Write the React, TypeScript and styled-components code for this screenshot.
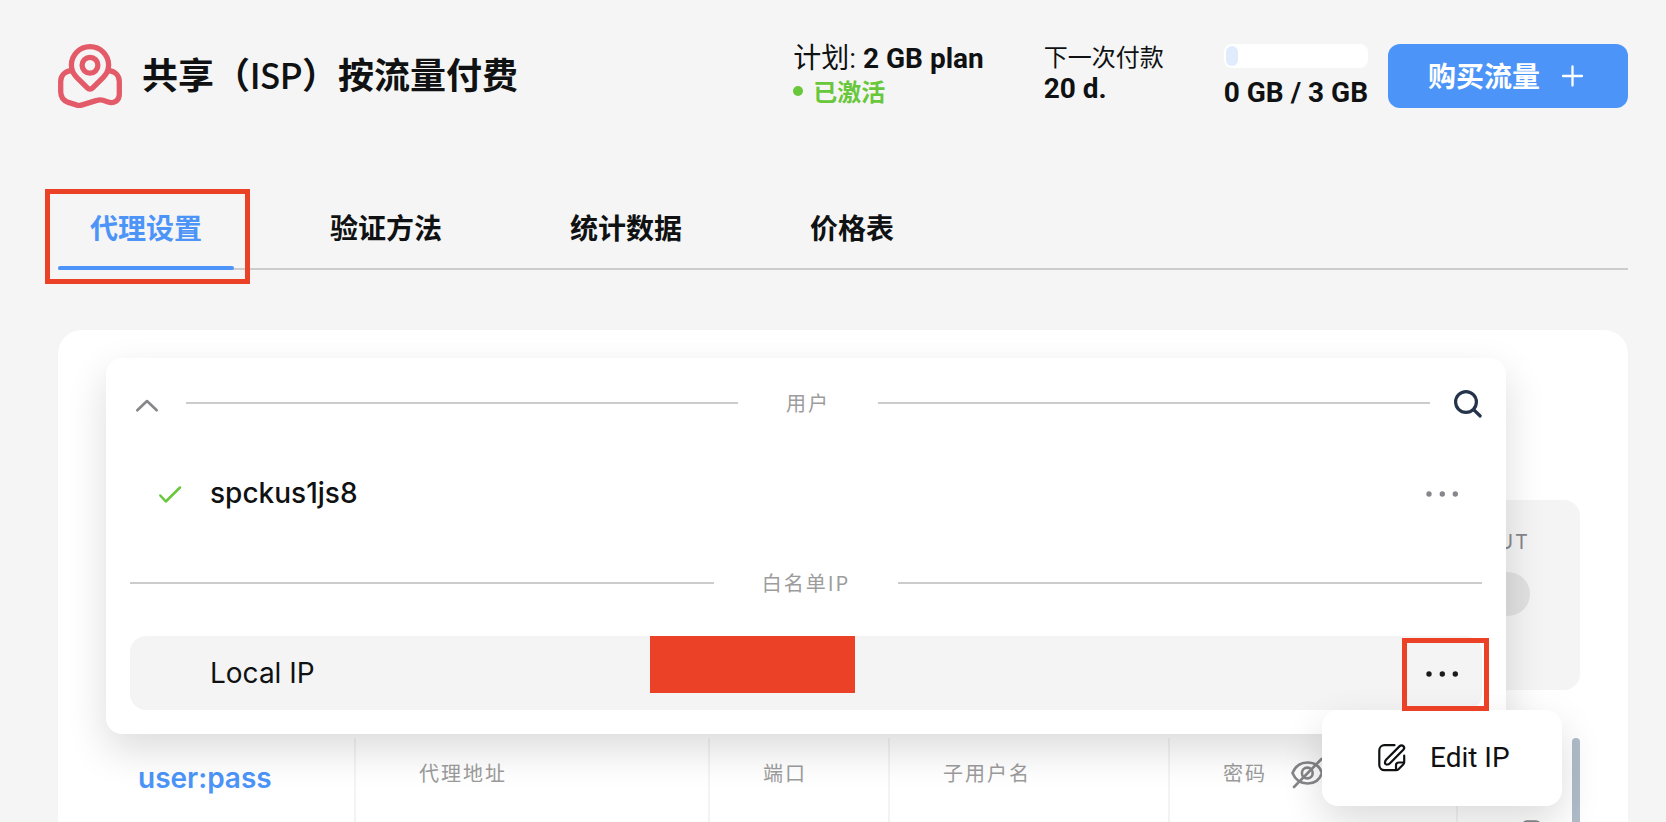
import React, { useState } from "react";
import styled, { createGlobalStyle, css } from "styled-components";

const colors = {
  page: "#f5f5f5",
  surface: "#ffffff",
  text: "#0f1112",
  muted: "#9c9c9c",
  icon: "#86868b",
  line: "#cccccc",
  cell: "#f3f3f3",
  blue: "#4c94f8",
  green: "#68c73a",
  red: "#eb4127",
  brand: "#e35a68",
  navy: "#25344b",
};

const roboto = `Roboto, "Noto Sans CJK SC", sans-serif`;
const inter = `Inter, "Noto Sans CJK SC", sans-serif`;
const lato = `Lato, "Noto Sans CJK SC", sans-serif`;
const cjk = `"Noto Sans CJK SC", sans-serif`;

const GlobalStyle = createGlobalStyle`
  *, *::before, *::after { box-sizing: border-box; }
  body { margin: 0; background: ${colors.page}; color: ${colors.text}; font-family: ${roboto}; }
  button { border: 0; padding: 0; background: none; color: inherit; font: inherit; cursor: pointer; }
  h1, p { margin: 0; }
  svg { display: block; flex: none; overflow: visible; }
`;

const Page = styled.div`
  display: flex;
  flex-direction: column;
  height: 100vh;
  overflow: hidden;
  padding: 44px 38px 0 58px;
`;

const Header = styled.header`
  display: flex;
  align-items: center;
  height: 64px;
`;

const Title = styled.h1`
  flex: 1;
  margin-left: 20px;
  padding-bottom: 2px;
  font: 600 36px/44px ${lato};
  white-space: nowrap;
`;

const Stats = styled.div`
  display: flex;
  align-items: flex-start;
  align-self: stretch;
  gap: 60px;
  margin-right: 20px;
  white-space: nowrap;
`;

const Stat = styled.div`
  display: flex;
  flex-direction: column;
`;

const StatLine = styled.p<{ $small?: boolean }>`
  font-size: ${(p) => (p.$small ? 24 : 28)}px;
  line-height: ${(p) => (p.$small ? 28 : 32)}px;
`;

const PlanLine = styled(StatLine)`
  line-height: 30px;
`;

const DueLine = styled(StatLine)`
  line-height: 34px;
`;

const Status = styled.p`
  display: flex;
  align-items: center;
  gap: 10px;
  color: ${colors.green};
  font: 700 24px/34px ${cjk};

  &::before {
    content: "";
    width: 10px;
    height: 10px;
    border-radius: 50%;
    background: currentColor;
  }
`;

const Meter = styled.div`
  width: 144px;
  height: 24px;
  margin-bottom: 8px;
  padding: 2px;
  border-radius: 8px;
  background: ${colors.surface};
`;

const MeterFill = styled.div`
  width: 12px;
  height: 20px;
  border-radius: 6px;
  background: #e0ecfe;
`;

const BuyButton = styled.button`
  display: flex;
  align-items: center;
  gap: 20px;
  width: 240px;
  height: 64px;
  padding: 0 0 2px 40px;
  border-radius: 12px;
  background: ${colors.blue};
  color: #fff;
  font: 700 28px/36px ${cjk};
`;

const Tabs = styled.nav`
  display: flex;
  flex: none;
  gap: 64px;
  height: 82px;
  margin-top: 80px;
  border-bottom: 2px solid ${colors.line};
`;

const marked = css`
  position: relative;

  &::before {
    content: "";
    position: absolute;
    z-index: 5;
    border: 5px solid ${colors.red};
    pointer-events: none;
  }
`;

const Tab = styled.button<{ $active?: boolean }>`
  height: 82px;
  padding: 0 32px;
  border-bottom: 4px solid transparent;
  font: 600 28px/36px ${cjk};
  white-space: nowrap;

  ${(p) =>
    p.$active &&
    css`
      ${marked}
      color: ${colors.blue};

      &::before {
        inset: 1px -16px -18px -13px;
      }

      &::after {
        content: "";
        position: absolute;
        inset: auto 0 -4px;
        height: 4px;
        border-radius: 2px;
        background: ${colors.blue};
      }
    `}
`;

const Card = styled.main`
  display: flex;
  flex: 1;
  flex-direction: column;
  gap: 48px;
  min-height: 0;
  margin-top: 60px;
  padding: 48px 48px 0;
  border-radius: 24px 24px 0 0;
  background: ${colors.surface};
`;

const Picker = styled.section`
  position: relative;
  flex: none;
  height: 74px;
`;

const shadow = css`
  box-shadow: 0 16px 40px rgba(0, 0, 0, 0.14);
`;

const Dropdown = styled.div`
  position: absolute;
  z-index: 2;
  top: -20px;
  right: 74px;
  left: 0;
  padding: 24px;
  border-radius: 16px;
  background: ${colors.surface};
  ${shadow}
`;

const Divider = styled.div`
  display: flex;
  align-items: center;
  gap: 24px;
  height: 42px;
`;

const DividerLabel = styled.div`
  display: flex;
  flex: 1;
  align-items: center;
  gap: 48px;
  color: ${colors.muted};
  font: 400 20px/28px ${cjk};
  letter-spacing: 2px;

  &::before,
  &::after {
    content: "";
    flex: 1;
    height: 2px;
    background: ${colors.line};
  }
`;

const Entry = styled.div<{ $active?: boolean }>`
  position: relative;
  display: flex;
  align-items: center;
  height: 74px;
  margin: 32px 0;
  padding: 0 24px 0 28px;
  border-radius: 16px;
  background: ${(p) => (p.$active ? "#f4f4f4" : "transparent")};

  &:last-child {
    margin-bottom: 0;
  }
`;

const EntryMark = styled.span`
  width: 24px;
  margin-right: 28px;
`;

const EntryName = styled.span<{ $medium?: boolean }>`
  width: 440px;
  font: ${(p) => (p.$medium ? 500 : 400)} 28px/36px ${inter};
`;

const Redacted = styled.span`
  align-self: flex-start;
  width: 205px;
  height: 57px;
  background: ${colors.red};
`;

const MoreButton = styled.button<{ $marked?: boolean }>`
  margin-left: auto;
  padding-top: 2px;
  color: ${(p) => (p.$marked ? "#1b1b1d" : colors.icon)};

  ${(p) =>
    p.$marked &&
    css`
      ${marked}

      &::before {
        inset: -18px -31px -21px -22px;
      }
    `}
`;

const EntryMenu = styled.div`
  position: absolute;
  z-index: 3;
  top: 74px;
  right: -80px;
  width: 240px;
  border-radius: 16px;
  background: ${colors.surface};
  ${shadow}
`;

const MenuItem = styled.button`
  display: flex;
  align-items: center;
  gap: 24px;
  width: 100%;
  height: 96px;
  padding: 0 0 0 56px;
  font: 400 28px/36px ${roboto};
`;

const Panel = styled.section`
  display: flex;
  flex: none;
  flex-direction: column;
  align-items: flex-end;
  gap: 16px;
  height: 190px;
  padding: 28px 50px;
  border-radius: 16px;
  background: #f4f4f4;
`;

const PanelLabel = styled.label`
  color: ${colors.icon};
  font: 400 20px/28px ${inter};
  letter-spacing: 2px;
`;

const Switch = styled.input`
  appearance: none;
  width: 80px;
  height: 44px;
  margin: 0;
  border-radius: 22px;
  background: #e1e1e1;
`;

const Endpoints = styled.section`
  display: flex;
  flex: 1;
  min-height: 0;
`;

const Methods = styled.div`
  flex: none;
  width: 248px;
  padding: 22px 32px;
`;

const MethodButton = styled.button`
  color: ${colors.blue};
  font: 600 28px/36px ${inter};
`;

const Table = styled.table`
  flex: 1;
  align-self: flex-start;
  border-spacing: 0;
  table-layout: fixed;
`;

const HeadCell = styled.th<{ $width?: number; $wide?: boolean }>`
  width: ${(p) => (p.$width ? `${p.$width}px` : "auto")};
  height: 70px;
  padding: 0 0 0 ${(p) => (p.$wide ? 63 : 53)}px;
  border-left: 2px solid ${colors.cell};
  color: ${colors.muted};
  font: 400 20px/28px ${cjk};
  letter-spacing: 2px;
  text-align: left;
  white-space: nowrap;
`;

const HeadContent = styled.span`
  display: flex;
  align-items: center;
  gap: 24px;
`;

const Cell = styled.td`
  height: 96px;
  padding: 12px 0 0 60px;
  border-left: 2px solid ${colors.cell};
  color: ${colors.icon};
  vertical-align: top;
`;

const ScrollThumb = styled.div`
  flex: none;
  width: 8px;
  border-radius: 4px 4px 0 0;
  background: #b0bcc9;
`;

type StrokeProps = { w: number; h: number; sw: number; color?: string; children: React.ReactNode };

const Stroke = ({ w, h, sw, color = "currentColor", children }: StrokeProps) => (
  <svg
    width={w}
    height={h}
    viewBox={`0 0 ${w} ${h}`}
    fill="none"
    stroke={color}
    strokeWidth={sw}
    strokeLinecap="round"
    strokeLinejoin="round"
    aria-hidden="true"
  >
    {children}
  </svg>
);

const MapPinLogo = () => (
  <Stroke w={64} h={64} sw={5.3} color={colors.brand}>
    <circle cx="32" cy="21.3" r="7.9" />
    <path d="M32 2.7C21.6 2.7 13.4 10.9 13.4 21.1c0 5.2 1.7 8.7 5.3 12.2l10.6 10.6c1.6 1.6 3.8 1.6 5.4 0l10.6-10.6c3.6-3.5 5.3-7 5.3-12.2C50.6 10.9 42.4 2.7 32 2.7z" />
    <path d="M13 26.7C6 27.7 2.7 32 2.7 37.5V47.5c0 5.5 2.7 9.2 7.6 10.9l8 2.5c2 .7 4 .6 6 0l14.5-4.5c2-.7 4-.8 6.2-.1l5 1.7c6 2 11.3-1.5 11.3-7.5V37.5c0-5.5-3.3-9.8-10.3-10.8" />
  </Stroke>
);

const Dots = () => (
  <svg width="34" height="32" viewBox="0 0 34 32" fill="currentColor" aria-hidden="true">
    <circle cx="5" cy="16" r="2.7" />
    <circle cx="18.3" cy="16" r="2.7" />
    <circle cx="31.3" cy="16" r="2.7" />
  </svg>
);

const EyeOff = () => (
  <Stroke w={32} h={32} sw={2.6} color={colors.icon}>
    <path d="M1.5 16C4 10 9 5.500 16.500 5.500S29 10 31 16C29 22 24 26.500 16.500 26.500S4 22 1.500 16z" />
    <circle cx="16.3" cy="16" r="5.4" />
    <path d="M3 30 30.5 2" />
  </Stroke>
);

const NoteEdit = () => (
  <Stroke w={28} h={28} sw={2.2}>
    <path d="M16.5 1.2H6.5a5.2 5.2 0 0 0-5.2 5.2v14.6a5.2 5.2 0 0 0 5.2 5.2h11.5c1 0 1.8-.3 2.5-1l4.7-4.7c.7-.7 1-1.5 1-2.5V11.5" />
    <path d="M18 26v-4.7c0-1.8 1-2.8 2.8-2.8h5.2" />
    <path d="M7 18.3c.1-1.1.5-2 1.3-2.8L21.7 2.1a2.5 2.5 0 0 1 3.6 3.6L12 19.2c-.8.8-1.7 1.2-2.8 1.3-1.5.2-2.4-.7-2.2-2.200z" />
  </Stroke>
);

export default function App() {
  const [tab, setTab] = useState("代理设置");
  const tabs = ["代理设置", "验证方法", "统计数据", "价格表"];

  return (
    <Page>
      <GlobalStyle />
      <Header>
        <MapPinLogo />
        <Title>共享（ISP）按流量付费</Title>
        <Stats>
          <Stat>
            <PlanLine>
              计划: <b>2 GB plan</b>
            </PlanLine>
            <Status>已激活</Status>
          </Stat>
          <Stat>
            <StatLine $small>下一次付款</StatLine>
            <DueLine>
              <b>20 d.</b>
            </DueLine>
          </Stat>
          <Stat>
            <Meter>
              <MeterFill />
            </Meter>
            <DueLine>
              <b>0 GB / 3 GB</b>
            </DueLine>
          </Stat>
        </Stats>
        <BuyButton>
          购买流量
          <Stroke w={24} h={24} sw={2.3}>
            <path d="M12.500 3.500v19M3 13h19" />
          </Stroke>
        </BuyButton>
      </Header>

      <Tabs>
        {tabs.map((name) => (
          <Tab key={name} $active={name === tab} onClick={() => setTab(name)}>
            {name}
          </Tab>
        ))}
      </Tabs>

      <Card>
        <Picker>
          <Dropdown>
            <Divider>
              <button aria-label="收起">
                <Stroke w={32} h={32} sw={2.6} color={colors.icon}>
                  <path d="M7.3 23.3 17 14l9.700 9.300" />
                </Stroke>
              </button>
              <DividerLabel>用户</DividerLabel>
              <button aria-label="搜索">
                <Stroke w={28} h={28} sw={3.2} color={colors.navy}>
                  <circle cx="12" cy="13" r="10.4" />
                  <path d="m20 21 6.2 6" />
                </Stroke>
              </button>
            </Divider>
            <Entry>
              <EntryMark>
                <Stroke w={24} h={24} sw={2.5} color={colors.green}>
                  <path d="m2.300 14.500 5.500 6L22 6.500" />
                </Stroke>
              </EntryMark>
              <EntryName $medium>spckus1js8</EntryName>
              <MoreButton aria-label="更多">
                <Dots />
              </MoreButton>
            </Entry>
            <Divider>
              <DividerLabel>白名单IP</DividerLabel>
            </Divider>
            <Entry $active>
              <EntryMark />
              <EntryName>Local IP</EntryName>
              <Redacted />
              <MoreButton aria-label="更多" $marked>
                <Dots />
              </MoreButton>
              <EntryMenu>
                <MenuItem>
                  <NoteEdit />
                  Edit IP
                </MenuItem>
              </EntryMenu>
            </Entry>
          </Dropdown>
        </Picker>

        <Panel>
          <PanelLabel htmlFor="output">OUTPUT</PanelLabel>
          <Switch id="output" type="checkbox" role="switch" />
        </Panel>

        <Endpoints>
          <Methods>
            <MethodButton>user:pass</MethodButton>
          </Methods>
          <Table>
            <thead>
              <tr>
                <HeadCell $wide>代理地址</HeadCell>
                <HeadCell $width={180}>端口</HeadCell>
                <HeadCell $width={280}>子用户名</HeadCell>
                <HeadCell $width={288}>
                  <HeadContent>
                    密码
                    <EyeOff />
                  </HeadContent>
                </HeadCell>
                <HeadCell $width={116} aria-label="复制" />
              </tr>
            </thead>
            <tbody>
              <tr>
                <Cell />
                <Cell />
                <Cell />
                <Cell />
                <Cell>
                  <button aria-label="复制">
                    <Stroke w={24} h={28} sw={2.4}>
                      <rect x="5" y="1.5" width="17" height="19" rx="4" />
                      <path d="M17 26H6a4 4 0 0 1-4-4V8" />
                    </Stroke>
                  </button>
                </Cell>
              </tr>
            </tbody>
          </Table>
          <ScrollThumb />
        </Endpoints>
      </Card>
    </Page>
  );
}
